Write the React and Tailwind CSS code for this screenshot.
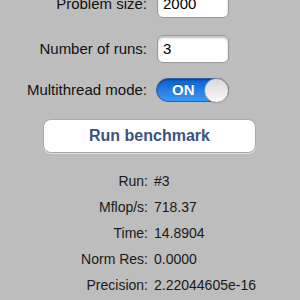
import React from "react";

function Field({ value }) {
  return (
    <div className="w-[72px] h-[28px] rounded-[6px] bg-white border border-[#9a9a9a] shadow-[inset_0_2px_2px_rgba(0,0,0,0.25)] flex items-center pl-[5px] text-[15px] text-black">
      {value}
    </div>
  );
}

function Row({ label, children, className = "" }) {
  return (
    <div className={"flex items-center " + className}>
      <div className="w-[148px] text-right text-[15px] text-[#111] pr-[1px]">{label}</div>
      <div className="ml-[9px]">{children}</div>
    </div>
  );
}

function Result({ label, value }) {
  return (
    <div className="flex items-center h-[26px] text-[14px] text-[#1a1a1a]">
      <div className="w-[148px] text-right">{label}</div>
      <div className="ml-[6px]">{value}</div>
    </div>
  );
}

export default function App() {
  return (
    <div
      className="w-[300px] h-[300px] bg-[#bdbdbd] overflow-hidden flex flex-col"
      style={{ fontFamily: '"Liberation Sans", Arial, sans-serif' }}
    >
      <div className="mt-[-10px] flex flex-col">
        <Row label="Problem size:">
          <Field value="2000" />
        </Row>
        <Row label="Number of runs:" className="mt-[17px]">
          <Field value="3" />
        </Row>
        <Row label="Multithread mode:" className="mt-[15px]">
          <div className="relative w-[73px] h-[24px] rounded-full border border-[#2a5fa8] bg-gradient-to-b from-[#0760d2] to-[#3d99f5] shadow-[inset_0_1px_2px_rgba(0,0,0,0.35)] -ml-[1px]">
            <span className="absolute left-[15px] top-0 h-full flex items-center text-white font-bold text-[15px] [text-shadow:0_-1px_0_rgba(0,0,0,0.3)]">
              ON
            </span>
            <div className="absolute right-[-1px] top-[-1px] w-[25px] h-[25px] rounded-full border border-[#9a9a9a] bg-gradient-to-b from-[#d8d8d8] to-[#fafafa] shadow-[0_0_1px_rgba(0,0,0,0.3)]" />
          </div>
        </Row>
      </div>
      <div className="mt-[17px] ml-[43px] w-[213px] h-[34px] rounded-[8px] bg-white border border-[#a8a8a8] shadow-[0_1px_0_rgba(255,255,255,0.5)] flex items-center justify-center font-bold text-[16px] text-[#3b5381]">
        Run benchmark
      </div>
      <div className="mt-[15px] flex flex-col">
        <Result label="Run:" value="#3" />
        <Result label="Mflop/s:" value="718.37" />
        <Result label="Time:" value="14.8904" />
        <Result label="Norm Res:" value="0.0000" />
        <Result label="Precision:" value="2.22044605e-16" />
      </div>
    </div>
  );
}
